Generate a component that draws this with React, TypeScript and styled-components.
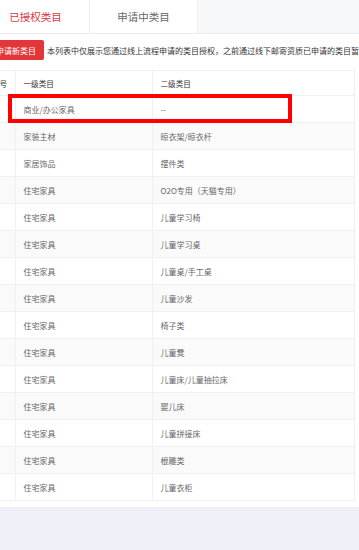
import styled, { createGlobalStyle } from 'styled-components';

interface TabProps {
  active?: boolean;
  offset?: number;
}

interface RowProps {
  striped?: boolean;
}

const GlobalStyle = createGlobalStyle`
  body {
    margin: 0;
    background: #eef1f8;
    font-family: "Noto Sans CJK SC", "Noto Sans", sans-serif;
  }
`;

const Root = styled.div`
  position: relative;
  width: 359px;
  height: 550px;
  overflow: hidden;
  background: #eef1f8;
`;

const TabBar = styled.div`
  display: flex;
  height: 33px;
  border-bottom: 1px solid #ebedf0;
  background: #f7f8fa;
`;

const Tab = styled.div<TabProps>`
  display: flex;
  align-items: center;
  justify-content: center;
  flex: 0 0 107px;
  margin-left: ${props => props.offset || 0}px;
  border-right: 1px solid #eceef1;
  font-size: 10.5px;
  color: ${props => (props.active ? '#d9363e' : '#666')};
  background: #fff;
`;

const Panel = styled.div`
  padding: 6px 0 6px;
  background: #fff;
`;

const Toolbar = styled.div`
  display: flex;
  align-items: center;
  height: 20px;
  margin-left: -12px;
  white-space: nowrap;
`;

const ApplyButton = styled.button`
  flex: none;
  height: 20px;
  padding: 0 8px;
  border: none;
  border-radius: 2px;
  font-family: inherit;
  font-size: 8px;
  color: #fff;
  background: #e2363b;
`;

const Notice = styled.span`
  margin-left: 3px;
  font-size: 8px;
  color: #333;
`;

const TableWrap = styled.div`
  margin-top: 10px;
  margin-left: -16px;
  width: 370px;
  border-top: 1px solid #eef0f4;
  border-right: 1px solid #e8eaee;
`;

const Table = styled.table`
  width: 370px;
  border-collapse: collapse;
  table-layout: fixed;
`;

const HeadCell = styled.th`
  height: 24px;
  padding: 0 8px;
  border-right: 1px solid #eef0f4;
  border-bottom: 1px solid #eef0f4;
  text-align: left;
  font-weight: normal;
  font-size: 7.6px;
  color: #333;
  white-space: nowrap;
  overflow: hidden;
`;

const Row = styled.tr<RowProps>`
  background: ${props => (props.striped ? '#fafafa' : '#fff')};
`;

const Cell = styled.td`
  height: 26px;
  padding: 0 8px;
  border-right: 1px solid #eef0f4;
  border-bottom: 1px solid #eef0f4;
  font-size: 8px;
  color: #666;
  white-space: nowrap;
  overflow: hidden;
`;

const IndexCell = styled(Cell)`
  font-size: 7px;
  color: #999;
`;

const Highlight = styled.div`
  position: absolute;
  left: 8px;
  top: 94px;
  width: 284px;
  height: 29px;
  box-sizing: border-box;
  border: 4px solid #ff0000;
  pointer-events: none;
`;

const ROWS = [
  ['商业/办公家具', '--'],
  ['家装主材', '晾衣架/晾衣杆'],
  ['家居饰品', '摆件类'],
  ['住宅家具', 'O2O专用（天猫专用）'],
  ['住宅家具', '儿童学习椅'],
  ['住宅家具', '儿童学习桌'],
  ['住宅家具', '儿童桌/手工桌'],
  ['住宅家具', '儿童沙发'],
  ['住宅家具', '椅子类'],
  ['住宅家具', '儿童凳'],
  ['住宅家具', '儿童床/儿童抽拉床'],
  ['住宅家具', '婴儿床'],
  ['住宅家具', '儿童拼接床'],
  ['住宅家具', '根雕类'],
  ['住宅家具', '儿童衣柜']
];

const App = () => {
  return (
    <Root>
      <GlobalStyle />
      <TabBar>
        <Tab active offset={-18}>已授权类目</Tab>
        <Tab>申请中类目</Tab>
      </TabBar>
      <Panel>
        <Toolbar>
          <ApplyButton>申请新类目</ApplyButton>
          <Notice>本列表中仅展示您通过线上流程申请的类目授权，之前通过线下邮寄资质已申请的类目暂不展示</Notice>
        </Toolbar>
        <TableWrap>
          <Table>
            <colgroup>
              <col style={{ width: 31 }} />
              <col style={{ width: 137 }} />
              <col style={{ width: 202 }} />
            </colgroup>
            <thead>
              <tr>
                <HeadCell>序号</HeadCell>
                <HeadCell>一级类目</HeadCell>
                <HeadCell>二级类目</HeadCell>
              </tr>
            </thead>
            <tbody>
              {ROWS.map(([first, second], i) => (
                <Row key={i} striped={i % 2 === 1}>
                  <IndexCell>{i + 1}</IndexCell>
                  <Cell>{first}</Cell>
                  <Cell>{second}</Cell>
                </Row>
              ))}
            </tbody>
          </Table>
        </TableWrap>
      </Panel>
      <Highlight />
    </Root>
  );
};

export default App;
